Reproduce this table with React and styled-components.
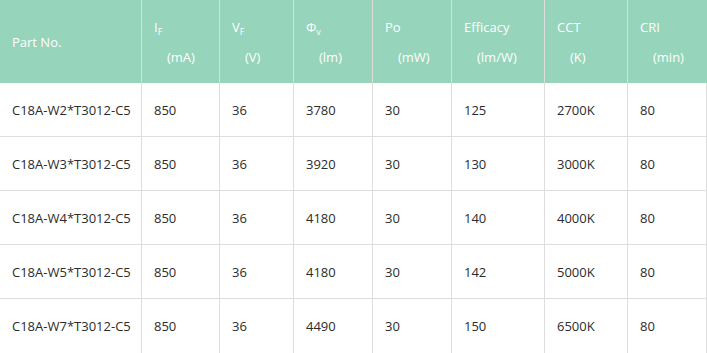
import React from 'react';
import styled, { createGlobalStyle } from 'styled-components';

const GlobalStyle = createGlobalStyle`
  body {
    margin: 0;
    background: #fff;
    font-family: "Open Sans", "Liberation Sans", sans-serif;
  }
`;

const COLS = '142px 78px 74px 79px 79px 93px 83px 79px';

const Table = styled.div`
  width: 707px;
  display: flex;
  flex-direction: column;
`;

const Row = styled.div`
  display: grid;
  grid-template-columns: ${COLS};
  height: ${({ head }) => (head ? 83 : 54)}px;
  background: ${({ head }) => (head ? '#96d4bb' : '#fff')};
  border-bottom: ${({ head }) => (head ? 'none' : '1px solid #dedede')};
  box-sizing: border-box;
  &:last-child {
    border-bottom: none;
  }
`;

const HeadCell = styled.div`
  border-right: 1px solid #dcdcdc;
  padding: 0 12px;
  color: #fff;
  font-size: 13px;
  display: flex;
  flex-direction: column;
  justify-content: center;
  &:last-child {
    border-right: none;
  }
`;

const Label = styled.div`
  line-height: 30px;
  white-space: nowrap;
  sub {
    font-size: 9px;
    vertical-align: -3px;
    line-height: 0;
  }
`;

const Unit = styled.div`
  line-height: 30px;
  padding-left: 13px;
  white-space: nowrap;
`;

const Cell = styled.div`
  border-right: 1px solid #dedede;
  padding: 0 12px;
  color: #2b2b2b;
  font-size: 13px;
  display: flex;
  align-items: center;
  white-space: nowrap;
  box-sizing: border-box;
`;

const heads = [
  { label: 'Part No.' },
  { label: <>I<sub>F</sub></>, unit: '(mA)' },
  { label: <>V<sub>F</sub></>, unit: '(V)' },
  { label: <>Φ<sub>v</sub></>, unit: '(lm)' },
  { label: 'Po', unit: '(mW)' },
  { label: 'Efficacy', unit: '(lm/W)' },
  { label: 'CCT', unit: '(K)' },
  { label: 'CRI', unit: '(min)' },
];

const rows = [
  ['C18A-W2*T3012-C5', '850', '36', '3780', '30', '125', '2700K', '80'],
  ['C18A-W3*T3012-C5', '850', '36', '3920', '30', '130', '3000K', '80'],
  ['C18A-W4*T3012-C5', '850', '36', '4180', '30', '140', '4000K', '80'],
  ['C18A-W5*T3012-C5', '850', '36', '4180', '30', '142', '5000K', '80'],
  ['C18A-W7*T3012-C5', '850', '36', '4490', '30', '150', '6500K', '80'],
];

export default function App() {
  return (
    <>
      <GlobalStyle />
      <Table>
        <Row head>
          {heads.map((h, i) => (
            <HeadCell key={i}>
              <Label>{h.label}</Label>
              {h.unit && <Unit>{h.unit}</Unit>}
            </HeadCell>
          ))}
        </Row>
        {rows.map((r, i) => (
          <Row key={i}>
            {r.map((v, j) => (
              <Cell key={j}>{v}</Cell>
            ))}
          </Row>
        ))}
      </Table>
    </>
  );
}
